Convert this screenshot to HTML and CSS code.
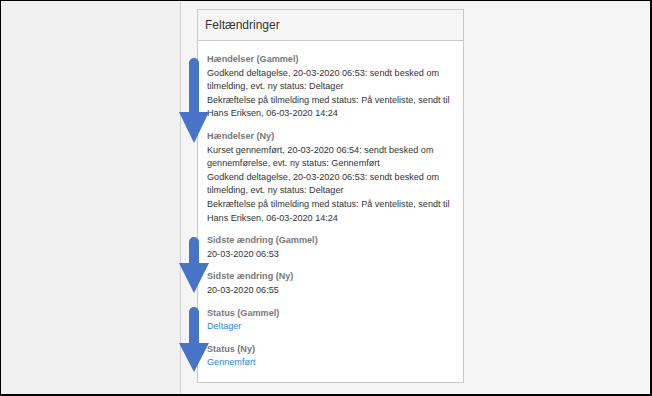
FILE: index.html
```html
<!DOCTYPE html>
<html lang="da">
<head>
    <meta charset="UTF-8">
    <meta name="viewport" content="width=device-width, initial-scale=1.0">
    <title>Feltændringer</title>
    <link rel="stylesheet" href="styles.css">
</head>
<body>
    <div class="screen">
        <div class="sidebar"></div>
        <div class="main">
            <div class="card">
                <div class="card-header">Feltændringer</div>
                <div class="card-body">
                    <div class="field">
                        <div class="label">Hændelser (Gammel)</div>
                        <div class="value">Godkend deltagelse, 20-03-2020 06:53: sendt besked om tilmelding, evt. ny status: Deltager</div>
                        <div class="value">Bekræftelse på tilmelding med status: På venteliste, sendt til Hans Eriksen, 06-03-2020 14:24</div>
                    </div>
                    <div class="field">
                        <div class="label">Hændelser (Ny)</div>
                        <div class="value">Kurset gennemført, 20-03-2020 06:54: sendt besked om gennemførelse, evt. ny status: Gennemført</div>
                        <div class="value">Godkend deltagelse, 20-03-2020 06:53: sendt besked om tilmelding, evt. ny status: Deltager</div>
                        <div class="value">Bekræftelse på tilmelding med status: På venteliste, sendt til Hans Eriksen, 06-03-2020 14:24</div>
                    </div>
                    <div class="field">
                        <div class="label">Sidste ændring (Gammel)</div>
                        <div class="value">20-03-2020 06:53</div>
                    </div>
                    <div class="field">
                        <div class="label">Sidste ændring (Ny)</div>
                        <div class="value">20-03-2020 06:55</div>
                    </div>
                    <div class="field">
                        <div class="label">Status (Gammel)</div>
                        <a class="value link" href="#">Deltager</a>
                    </div>
                    <div class="field">
                        <div class="label">Status (Ny)</div>
                        <a class="value link" href="#">Gennemført</a>
                    </div>
                </div>
            </div>
        </div>

        <svg class="arrows" width="652" height="396" viewBox="0 0 652 396">
            <path d="M189,63 a5,5 0 0 1 10,0 V112 H209 L194,143 L179,112 H189 Z"/>
            <path d="M189,242 a5,5 0 0 1 10,0 V263 H209 L194,293 L179,263 H189 Z"/>
            <path d="M189,312 a5,5 0 0 1 10,0 V343 H209 L194,372 L179,343 H189 Z"/>
        </svg>
    </div>
</body>
</html>
```

FILE: styles.css
```css
body {
    margin: 0;
    font-family: 'Liberation Sans', Arial, sans-serif;
    color: #333;
}

.screen {
    position: relative;
    display: flex;
    width: 652px;
    height: 396px;
    box-sizing: border-box;
    border-style: solid;
    border-color: #000;
    border-width: 1px 2px 2px 1px;
    overflow: hidden;
}

.sidebar {
    width: 179px;
    background: #f0f0f0;
    border-right: 1px solid #cfcfcf;
}

.main {
    flex: 1;
    background: #f5f5f5;
    padding: 8px 0 0 16px;
}

.card {
    width: 267px;
    box-sizing: border-box;
    background: #fff;
    border: 1px solid #c9c9c9;
}

.card-header {
    height: 30px;
    line-height: 30px;
    padding: 0 7px;
    font-size: 12px;
    color: #333;
    background: #f5f5f5;
    border-bottom: 1px solid #c9c9c9;
}

.card-body {
    padding: 12px 9px 12px;
    font-size: 9.1px;
    line-height: 13.6px;
}

.field {
    margin-bottom: 9px;
}

.field:last-child {
    margin-bottom: 0;
}

.label {
    font-weight: bold;
    color: #777;
}

.value {
    display: block;
    color: #333;
}

.link {
    color: #1f8ad6;
    text-decoration: none;
}

.arrows {
    position: absolute;
    top: -1px;
    left: -1px;
    pointer-events: none;
}

.arrows path {
    fill: #4774c6;
}
```
